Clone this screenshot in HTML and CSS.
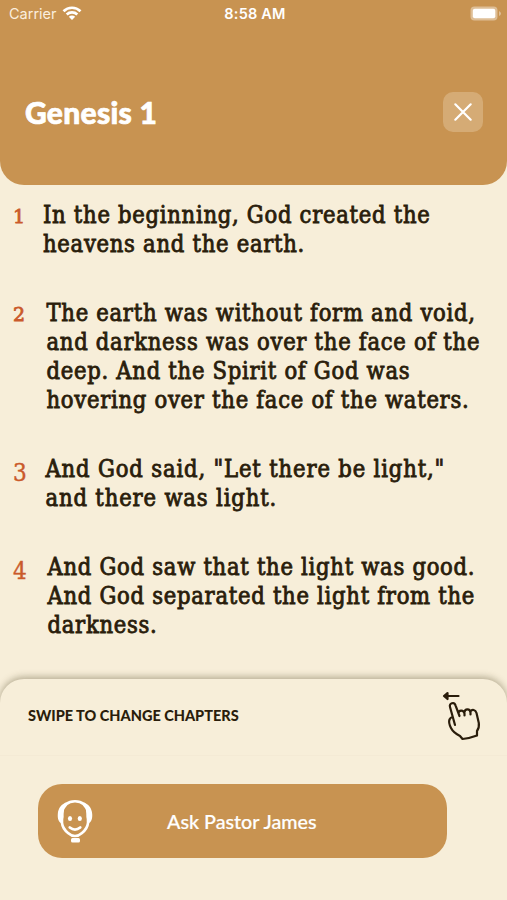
FILE: index.html
```html
<!DOCTYPE html>
<html lang="en">
<head>
    <meta charset="UTF-8">
    <meta name="viewport" content="width=device-width, initial-scale=1.0">
    <title>Genesis 1</title>
    <link rel="stylesheet" href="styles.css">
</head>
<body>

    <header class="header">
        <div class="status-bar">
            <div class="carrier">
                <span>Carrier</span>
                <svg class="wifi" width="20" height="15" viewBox="0 0 20 15">
                    <path d="M1.500 5.200C6.300.6 13.700.6 18.500 5.200M4.700 8.500C7.700 5.700 12.300 5.700 15.300 8.500" fill="none" stroke="#fff" stroke-width="2.700"/>
                    <path d="M6.800 10.700C8.600 9 11.400 9 13.200 10.700L10 14Z" fill="#fff"/>
                </svg>
            </div>
            <div class="time">8:58 AM</div>
            <svg class="battery" width="31" height="15" viewBox="0 0 31 15">
                <rect x=".5" y=".5" width="27" height="14" rx="4" fill="#fff" opacity=".4"/>
                <rect x="2.800" y="2.800" width="22.500" height="9.400" rx="2" fill="#fff"/>
                <path d="M29 5v5q2-1 2-2.500T29 5z" fill="#fff" opacity=".4"/>
            </svg>
        </div>

        <div class="title-row">
            <h1>Genesis 1</h1>
            <button class="close" aria-label="Close">
                <svg width="20" height="20" viewBox="0 0 20 20">
                    <path d="M2.300 2.300l15.400 15.400M17.700 2.300L2.300 17.700" stroke="#fff" stroke-width="2.200" stroke-linecap="round"/>
                </svg>
            </button>
        </div>
    </header>

    <main class="verses">
        <div class="verse one">
            <span class="number">1</span>
            <p>In the beginning, God created the<br>heavens and the earth.</p>
        </div>
        <div class="verse two">
            <span class="number">2</span>
            <p>The earth was without form and void,<br>and darkness was over the face of the<br>deep. And the Spirit of God was<br>hovering over the face of the waters.</p>
        </div>
        <div class="verse three">
            <span class="number">3</span>
            <p>And God said, "Let there be light,"<br>and there was light.</p>
        </div>
        <div class="verse four">
            <span class="number">4</span>
            <p>And God saw that the light was good.<br>And God separated the light from the<br>darkness.</p>
        </div>
    </main>

    <footer class="panel">
        <div class="swipe">
            <span>SWIPE TO CHANGE CHAPTERS</span>
            <svg class="hand" width="40" height="52" viewBox="0 0 40 52" fill="none" stroke="#2a1d0b" stroke-width="2.200" stroke-linecap="round" stroke-linejoin="round">
                <path d="M2 6h14.500M5.500 3L2 6l3.500 3z" fill="#2a1d0b"/>
                <path d="M13 35L8 17c-1.200-4 4.300-5.500 5.500-1.700L17.500 26M16.500 23.500c0-3.500 5-4 6 0v2M22.500 22c.5-3.500 5.500-3.500 6 .5v2M28.500 21.500c1.500-2.500 5-2 6 1.500l2.300 10c.5 3.500-.3 6-1.800 8v4.500c-4 1.500-9 3-14.500 3.500L18 46C14 44 10.500 41 9 38c-1.500-3-2.500-6-1.500-8.500.6-1.500 1.600-2.300 3.300-2.500"/>
            </svg>
        </div>

        <button class="ask">
            <svg class="pastor" width="36" height="44" viewBox="0 0 36 44">
                <path d="M5 14C6.500 5.500 12 2.200 18 2.200S29.500 5.500 31 14v10c-.5 5-3 7.500-6 10-2.200 2-4.500 3-7 3s-4.800-1-7-3c-3-2.500-5.500-5-6-10z" fill="none" stroke="#fff" stroke-width="2.600"/>
                <path d="M10 3C4.500 5 1.200 9 .8 15c-.3 4.500.7 8.500 4.200 9.500L6.500 18c0-6 .5-9.500 3.500-15zM26 3c5.500 2 8.800 6 9.200 12 .3 4.500-.7 8.500-4.200 9.500L29.500 18c0-6-.5-9.500-3.500-15z" fill="#fff"/>
                <ellipse cx="13" cy="19.500" rx="2.100" ry="2.500" fill="#fff"/>
                <ellipse cx="22.800" cy="19.500" rx="2.100" ry="2.500" fill="#fff"/>
                <path d="M12.800 28.500q5.200 4.200 10.400 0" fill="none" stroke="#fff" stroke-width="2.800" stroke-linecap="round"/>
                <rect x="14" y="39" width="9" height="4.500" rx="1.500" fill="#fff"/>
            </svg>
            <span>Ask Pastor James</span>
        </button>
    </footer>

</body>
</html>
```
FILE: styles.css
```css
* {
    box-sizing: border-box;
}

body {
    margin: 0;
    height: 900px;
    display: flex;
    flex-direction: column;
    overflow: hidden;
    background-color: #f7eed9;
    color: #2a1d0b;
    font-family: Lato, sans-serif;
}

button {
    border: none;
    padding: 0;
    cursor: pointer;
}

.header {
    height: 185px;
    background-color: #c89351;
    color: white;
    border-radius: 0 0 24px 24px;
}

.status-bar {
    display: grid;
    grid-template-columns: 1fr auto 1fr;
    align-items: center;
    height: 27px;
    padding: 0 6px 0 9px;
    font-family: Inter, sans-serif;
    font-size: 14.5px;
}

.carrier {
    display: flex;
    align-items: center;
    gap: 5px;
    color: #fbeedd;
}

.time {
    font-weight: 600;
    letter-spacing: 0.2px;
}

.battery {
    justify-self: end;
}

.title-row {
    display: flex;
    align-items: center;
    justify-content: space-between;
    padding: 65px 24px 0 25px;
}

h1 {
    margin: 0;
    font-size: 30px;
    font-weight: 900;
    line-height: 38px;
    letter-spacing: 0.3px;
    -webkit-text-stroke: 0.7px white;
}

.close {
    display: flex;
    align-items: center;
    justify-content: center;
    width: 40px;
    height: 40px;
    border-radius: 10px;
    background-color: #d5ab75;
}

.verses {
    display: flex;
    flex-direction: column;
    gap: 40px;
    height: 494px;
    padding: 16px 0 0 13px;
    font-family: "DejaVu Serif Condensed", "DejaVu Serif", serif;
    font-size: 23.5px;
    line-height: 29px;
    letter-spacing: 0.72px;
}

.verse {
    display: flex;
    align-items: baseline;
}

.verse p {
    margin: 0;
    white-space: nowrap;
    -webkit-text-stroke: 0.8px #2a1d0b;
}

.number {
    flex-shrink: 0;
    width: 33.5px;
    color: #ca5a2b;
    font-family: "DejaVu Serif", serif;
    font-size: 19px;
    line-height: 20px;
    -webkit-text-stroke: 0.8px #ca5a2b;
}

.one .number {
    width: 30px;
}

/* 3 and 4 hang below the baseline */
.three .number,
.four .number {
    position: relative;
    top: 4px;
    width: 32.5px;
    font-family: "DejaVu Serif Condensed", "DejaVu Serif", serif;
    font-size: 24px;
    -webkit-text-stroke: 0.4px #ca5a2b;
}

.four .number {
    width: 34.5px;
}

.three p {
    letter-spacing: 0.85px;
}

.panel {
    height: 221px;
    border-radius: 24px 24px 0 0;
    background-color: #f7eed9;
    box-shadow: 0 -2px 7px rgba(80, 70, 35, 0.4);
}

.swipe {
    display: flex;
    align-items: center;
    justify-content: space-between;
    height: 77px;
    padding: 0 25px 3px 28px;
    border-bottom: 1px solid #f4ead5;
    font-size: 14.5px;
    font-weight: 900;
}

.ask {
    display: flex;
    align-items: center;
    width: 409px;
    height: 74px;
    margin: 28px 0 0 38px;
    padding-left: 19px;
    border-radius: 24px;
    background-color: #c89351;
    color: white;
    font-family: Lato, sans-serif;
    font-size: 19.7px;
    font-weight: 500;
}

.ask span {
    margin-left: 74px;
    padding-top: 1px;
    -webkit-text-stroke: 0.2px white;
}
```
